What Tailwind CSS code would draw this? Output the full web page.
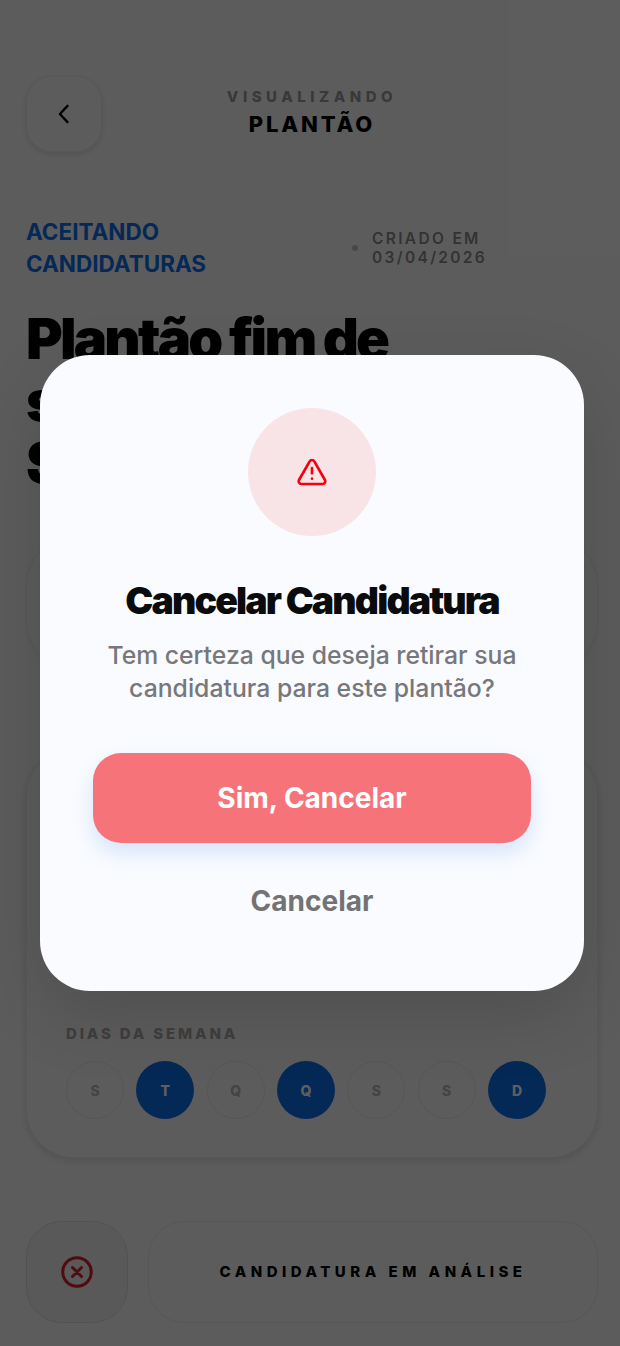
<!DOCTYPE html>
<html lang="pt-BR">
<head>
    <meta charset="UTF-8">
    <meta name="viewport" content="width=device-width, initial-scale=1.0">
    <title>Plantão</title>
    <script src="https://cdn.jsdelivr.net/npm/@tailwindcss/browser@4"></script>
</head>
<body class="bg-[#fafafa] font-['Inter',sans-serif] overflow-hidden">
    <div class="relative w-[624px] h-[1346px] overflow-hidden">
        <!-- Page behind the modal -->
        <div class="flex flex-col h-full pt-[76px]">
            <header class="flex items-start px-[26px]">
                <button class="w-[76px] h-[76px] rounded-[26px] bg-[#fafafa] border border-[#eeeeee] shadow-[0_2px_6px_rgba(0,0,0,0.12)] flex items-center justify-center text-black">
                    <svg class="w-7 h-7" viewBox="0 0 24 24" fill="none" stroke="currentColor" stroke-width="2" stroke-linecap="round" stroke-linejoin="round"><path d="M15 5l-6.5 7 6.5 7"/></svg>
                </button>
                <div class="flex-1 mr-[76px] mt-[11px] text-center">
                    <p class="text-[15px] leading-[20px] font-extrabold tracking-[0.3em] text-[#9a9a9c]">VISUALIZANDO</p>
                    <p class="mt-[3px] text-[22px] leading-[28px] font-extrabold tracking-[0.13em] text-black">PLANTÃO</p>
                </div>
            </header>

            <div class="flex items-center mt-[64px] px-[26px]">
                <p class="w-[326px] text-[22.5px] leading-[32px] font-bold text-[#0f6fe8]">ACEITANDO<br>CANDIDATURAS</p>
                <span class="w-[6px] h-[6px] rounded-full bg-[#c4c4c6]"></span>
                <p class="ml-[14px] text-[15.5px] leading-[19px] font-semibold tracking-[0.15em] text-[#8b8b8e]">CRIADO EM<br>03/04/2026</p>
            </div>

            <h1 class="mt-[28px] px-[26px] text-[56px] leading-[62px] font-black tracking-[-0.05em] text-black">Plantão fim de<br>semana<br>SP</h1>

            <section class="mx-[26px] mt-[42px] h-[134px] shrink-0 rounded-[48px] bg-[#fafafa] border border-[#e8e8e8] shadow-[0_2px_8px_rgba(0,0,0,0.04)]"></section>

            <section class="mx-[26px] mt-[78px] h-[410px] shrink-0 rounded-[48px] bg-[#fafafa] border border-[#eeeeee] shadow-[0_3px_8px_rgba(0,0,0,0.12)] flex flex-col justify-end pl-[39px] pr-[51px] pb-[38px]">
                <p class="text-[15px] leading-[20px] font-extrabold tracking-[0.19em] text-[#a9a9ab]">DIAS DA SEMANA</p>
                <div class="flex justify-between mt-[17px]">
                    <span class="w-[58px] h-[58px] rounded-full border border-[#e9e9e9] flex items-center justify-center text-[14px] font-extrabold text-[#b8b8ba]">S</span>
                    <span class="w-[58px] h-[58px] rounded-full bg-[#0f6fe8] flex items-center justify-center text-[14px] font-extrabold text-white">T</span>
                    <span class="w-[58px] h-[58px] rounded-full border border-[#e9e9e9] flex items-center justify-center text-[14px] font-extrabold text-[#b8b8ba]">Q</span>
                    <span class="w-[58px] h-[58px] rounded-full bg-[#0f6fe8] flex items-center justify-center text-[14px] font-extrabold text-white">Q</span>
                    <span class="w-[58px] h-[58px] rounded-full border border-[#e9e9e9] flex items-center justify-center text-[14px] font-extrabold text-[#b8b8ba]">S</span>
                    <span class="w-[58px] h-[58px] rounded-full border border-[#e9e9e9] flex items-center justify-center text-[14px] font-extrabold text-[#b8b8ba]">S</span>
                    <span class="w-[58px] h-[58px] rounded-full bg-[#0f6fe8] flex items-center justify-center text-[14px] font-extrabold text-white">D</span>
                </div>
            </section>

            <footer class="mt-[35px] border-t border-[#f4f4f4] pt-[27px] px-[26px] flex gap-[20px]">
                <button class="w-[102px] h-[102px] shrink-0 rounded-[36px] bg-[#f0f0f0] border border-[#dedede] flex items-center justify-center text-[#d8202c]">
                    <svg class="w-[36px] h-[36px]" viewBox="0 0 24 24" fill="none" stroke="currentColor" stroke-width="2" stroke-linecap="round" stroke-linejoin="round"><circle cx="12" cy="12" r="9.5"/><path d="M15 9l-6 6M9 9l6 6"/></svg>
                </button>
                <div class="flex-1 h-[102px] rounded-[36px] border border-[#e9e9e9] flex items-center justify-center text-[15px] font-extrabold tracking-[0.3em] text-black">CANDIDATURA EM ANÁLISE</div>
            </footer>
        </div>

        <!-- Confirm modal -->
        <div class="absolute inset-0 bg-black/[0.63] flex items-center justify-center">
            <div class="w-[544px] h-[636px] rounded-[50px] bg-[#f9fbfe] shadow-[0_24px_70px_rgba(0,0,0,0.14)] flex flex-col items-center pt-[53px] px-[53px]">
                <div class="w-[128px] h-[128px] rounded-full bg-[#f8e4e7] flex items-center justify-center text-[#f5000f]">
                    <svg class="w-8 h-8" viewBox="0 0 24 24" fill="none" stroke="currentColor" stroke-width="2" stroke-linecap="round" stroke-linejoin="round"><path d="M21.73 18l-8-14a2 2 0 0 0-3.48 0l-8 14A2 2 0 0 0 4 21h16a2 2 0 0 0 1.73-3"/><path d="M12 9v4"/><path d="M12 17h.01"/></svg>
                </div>
                <h2 class="mt-[42px] text-[37.5px] leading-[46px] font-black tracking-[-0.05em] text-[#0a0b0d]">Cancelar Candidatura</h2>
                <p class="mt-[15px] text-[24.75px] leading-[33px] font-[450] text-center text-[#77777c]">Tem certeza que deseja retirar sua candidatura para este plantão?</p>
                <button class="mt-[48px] w-full h-[90px] shrink-0 rounded-[28px] bg-[#f67479] shadow-[0_10px_20px_rgba(59,130,246,0.18)] text-[28px] font-bold text-white">Sim, Cancelar</button>
                <button class="mt-[36px] text-[28px] leading-[44px] font-bold text-[#737376]">Cancelar</button>
            </div>
        </div>
    </div>
</body>
</html>
